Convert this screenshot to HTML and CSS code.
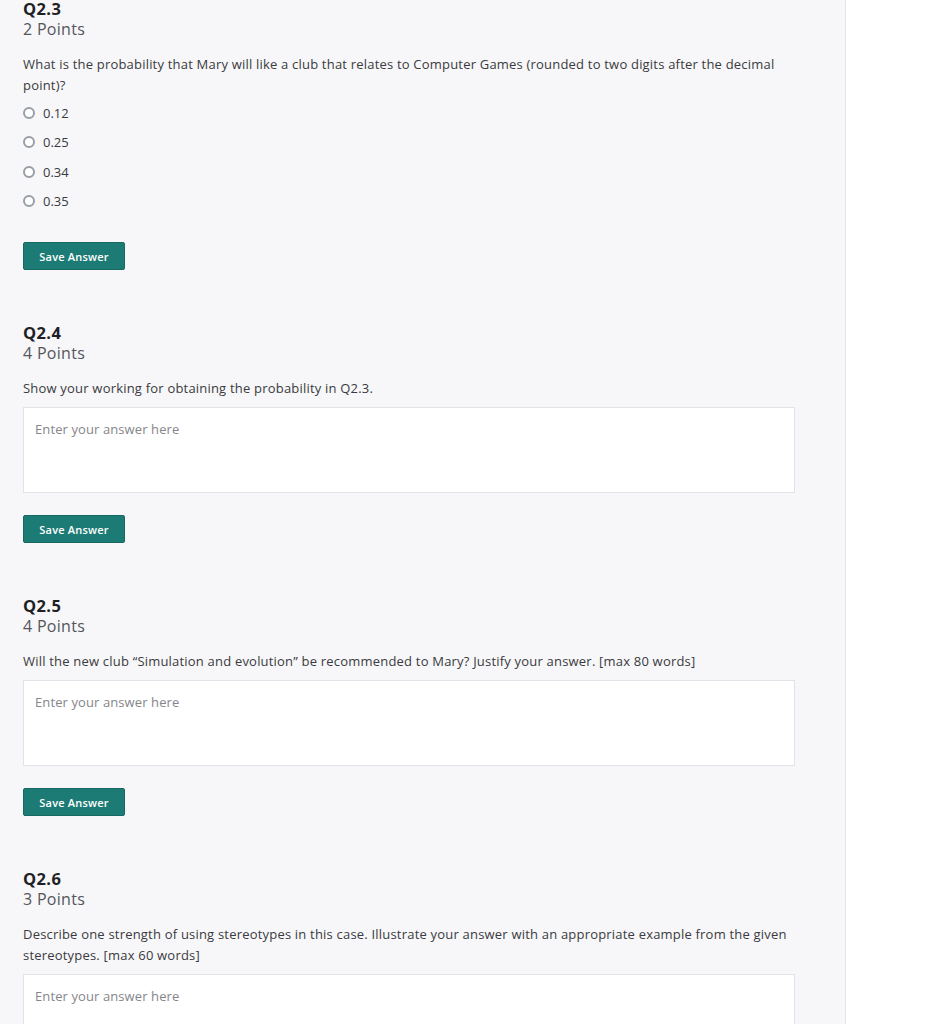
FILE: index.html
```html
<!DOCTYPE html>
<html>
<head>
<meta charset="utf-8">
<link rel="stylesheet" href="styles.css">
</head>
<body>
<div class="page">
  <main class="main">
    <section class="question first">
      <h3 class="q-title">Q2.3</h3>
      <div class="q-points">2 Points</div>
      <p class="q-text">What is the probability that Mary will like a club that relates to Computer Games (rounded to two digits after the decimal point)?</p>
      <div class="options">
        <label class="option"><span class="radio"></span><span>0.12</span></label>
        <label class="option"><span class="radio"></span><span>0.25</span></label>
        <label class="option"><span class="radio"></span><span>0.34</span></label>
        <label class="option"><span class="radio"></span><span>0.35</span></label>
      </div>
      <button class="save save-mc">Save Answer</button>
    </section>

    <section class="question">
      <h3 class="q-title">Q2.4</h3>
      <div class="q-points">4 Points</div>
      <p class="q-text">Show your working for obtaining the probability in Q2.3.</p>
      <div class="answer">Enter your answer here</div>
      <button class="save">Save Answer</button>
    </section>

    <section class="question">
      <h3 class="q-title">Q2.5</h3>
      <div class="q-points">4 Points</div>
      <p class="q-text">Will the new club “Simulation and evolution” be recommended to Mary? Justify your answer. [max 80 words]</p>
      <div class="answer">Enter your answer here</div>
      <button class="save">Save Answer</button>
    </section>

    <section class="question">
      <h3 class="q-title">Q2.6</h3>
      <div class="q-points">3 Points</div>
      <p class="q-text">Describe one strength of using stereotypes in this case. Illustrate your answer with an appropriate example from the given stereotypes. [max 60 words]</p>
      <div class="answer">Enter your answer here</div>
    </section>
  </main>
  <aside class="side"></aside>
</div>
</body>
</html>
```

FILE: styles.css
```css
html, body {
  margin: 0;
  padding: 0;
  background: #ffffff;
  font-family: "Open Sans", "Liberation Sans", sans-serif;
  color: #3a3a40;
}

.page {
  display: flex;
  height: 1024px;
  overflow: hidden;
}

.main {
  width: 822px;
  padding-left: 23px;
  background: #f7f7f9;
  border-right: 1px solid #e4e4ea;
  flex: none;
}

.side {
  flex: 1;
  background: #ffffff;
}

.question {
  width: 772px;
  margin-top: 54px;
}

.question.first {
  margin-top: 0;
}

.q-title {
  margin: 0;
  font-size: 16.5px;
  line-height: 17px;
  font-weight: 700;
  letter-spacing: 0.4px;
  color: #1f1f26;
}

.q-points {
  margin-top: 2px;
  font-size: 16px;
  line-height: 21px;
  letter-spacing: 0.3px;
  color: #55555c;
}

.q-text {
  margin: 14px 0 0;
  font-size: 13px;
  line-height: 21px;
  letter-spacing: 0.2px;
  color: #3a3a40;
}

.options {
  margin-top: 2px;
}

.option {
  display: flex;
  align-items: center;
  gap: 8px;
  height: 29.5px;
  font-size: 13px;
  color: #3a3a40;
}

.radio {
  width: 12px;
  height: 12px;
  box-sizing: border-box;
  border: 2px solid #979ea5;
  border-radius: 50%;
  background: #ffffff;
}

.answer {
  margin-top: 8px;
  height: 86px;
  box-sizing: border-box;
  border: 1px solid #e2e2e8;
  background: #ffffff;
  padding: 12px 11px;
  font-size: 13px;
  line-height: 18px;
  letter-spacing: 0.1px;
  color: #85858c;
}

.save {
  display: block;
  margin-top: 22px;
  height: 28px;
  width: 102px;
  padding: 0;
  background: #1c7b74;
  border: 1px solid #166860;
  border-radius: 2px;
  color: #ffffff;
  font-family: "Open Sans", "Liberation Sans", sans-serif;
  font-size: 11px;
  font-weight: 600;
  letter-spacing: 0.2px;
}

.save-mc {
  margin-top: 26px;
}
```
